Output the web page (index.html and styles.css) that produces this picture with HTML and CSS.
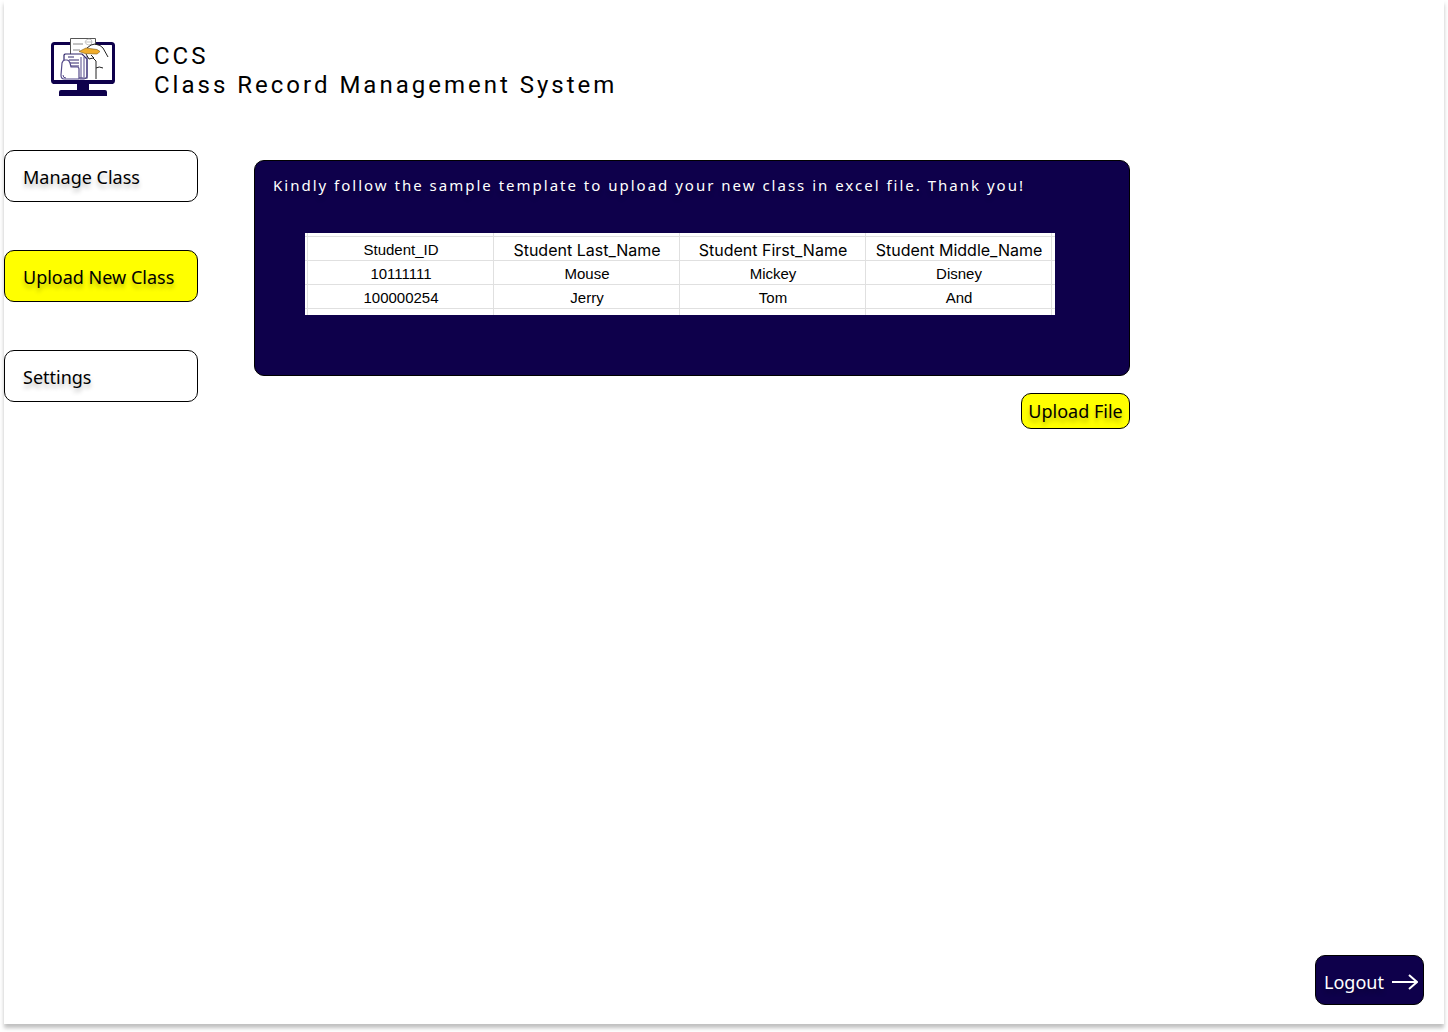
FILE: index.html
```html
<!DOCTYPE html>
<html lang="en">
<head>
<meta charset="utf-8">
<meta name="viewport" content="width=device-width, initial-scale=1">
<title>CCS Class Record Management System</title>
<link rel="stylesheet" href="styles.css">
</head>
<body>
<div class="page">
  <header class="header">
    <svg class="logo" viewBox="0 0 64 60" fill="none" aria-hidden="true">
      <rect x="1.5" y="6.5" width="61" height="39" rx="2" fill="#fff" stroke="#0e004b" stroke-width="3"/>
      <path d="M2 43h60v4H2zM26 47h12v6h16q2 0 2 2v4H8v-4q0-2 2-2h16z" fill="#0e004b"/>
      <path d="M19.500 18V1.500h25V10L40 20H19.500z" fill="#fff"/>
      <path d="M19.500 18V1.500h25V8" stroke="#555" stroke-width="1"/>
      <path d="M22 7h10M22 13h7" stroke="#888" stroke-width="1"/>
      <path d="M34 5q1-3 4-3t3 3-3 3-4-3M35 5h6" stroke="#aaa" stroke-width=".7"/>
      <path d="M14 17h17l5 5v19H13V18z" fill="#fff" stroke="#30266b" stroke-width="1.200"/>
      <path d="M17 20h6M18 23h10M18 26h10M18 29h10" stroke="#30266b" stroke-width="1"/>
      <path d="M11 26q1-3 3-3h2q2 0 3 3l1 4h6q2 0 2 2v10H13q-3 0-3-4z" fill="#fff" stroke="#554b8b" stroke-width="1.200"/>
      <path d="M12 38q0 3 3 3M29 42h4q3 0 3-3V19M30 41V20M33 40V20" stroke="#554b8b" stroke-width="1"/>
      <path d="M36 11q4-4 8-4 6 1 8 4l5 9M35 17l3 5 4-1 3 3v18M45 31q3-2 7 0M40 18l3 3" stroke="#222" stroke-width="1"/>
      <path d="M28 14.500l7-3.500 11 1.500 3 2-3 2.500-12-.5z" fill="#f0ad2c" stroke="#805b10" stroke-width=".6"/>
    </svg>
    <h1 class="title">CCS<br>Class Record Management System</h1>
  </header>
  <div class="body">
    <nav class="nav" aria-label="Main">
      <a class="nav-link" href="#manage">Manage Class</a>
      <a class="nav-link nav-link-active" href="#upload" aria-current="page">Upload New Class</a>
      <a class="nav-link" href="#settings">Settings</a>
    </nav>
    <main class="main">
      <section class="panel">
        <p class="hint">Kindly follow the sample template to upload your new class in excel file. Thank you!</p>
        <div class="sheet">
          <table class="sample">
            <thead>
              <tr><th class="plain" scope="col">Student_ID</th><th scope="col">Student Last_Name</th><th scope="col">Student First_Name</th><th scope="col">Student Middle_Name</th></tr>
            </thead>
            <tbody>
              <tr><td>10111111</td><td>Mouse</td><td>Mickey</td><td>Disney</td></tr>
              <tr><td>100000254</td><td>Jerry</td><td>Tom</td><td>And</td></tr>
            </tbody>
          </table>
        </div>
      </section>
      <button class="upload" type="button">Upload File</button>
    </main>
  </div>
  <footer class="footer">
    <button class="logout" type="button">Logout
      <svg class="arrow" viewBox="0 0 26 16" fill="none" stroke="#fff" stroke-width="2" aria-hidden="true"><path d="M0 8h25M17 1l8 7-8 7"/></svg>
    </button>
  </footer>
</div>
</body>
</html>
```
FILE: styles.css
```css
* {
  box-sizing: border-box;
}

body {
  margin: 0;
  padding: 0 4px 8px;
  background: #fff;
  color: #000;
  font-family: "Noto Sans", sans-serif;
}

.page {
  display: flex;
  flex-direction: column;
  min-height: calc(100vh - 8px);
  background: #fff;
  box-shadow: 0 4px 4px rgba(0, 0, 0, 0.25);
}

.header {
  display: flex;
  align-items: flex-start;
  gap: 39px;
  padding: 37px 47px 0;
}

.logo {
  flex: none;
  width: 64px;
  height: 60px;
}

.title {
  margin: 5px 0 0;
  font: 400 24px/29px Roboto, sans-serif;
  letter-spacing: 3px;
}

.body {
  display: flex;
  align-items: flex-start;
  gap: 56px;
  padding-top: 50px;
}

.nav {
  flex: none;
  display: flex;
  flex-direction: column;
  gap: 48px;
  width: 194px;
}

.nav-link {
  height: 52px;
  padding-left: 18px;
  border: 1px solid #000;
  border-radius: 10px;
  background: #fff;
  color: #000;
  font-size: 18px;
  line-height: 52px;
  text-decoration: none;
  text-shadow: 0 4px 4px rgba(0, 0, 0, 0.25);
}

.nav-link-active {
  background: #ff0;
}

.main {
  flex: 1;
  display: flex;
  flex-direction: column;
  align-items: flex-end;
  gap: 17px;
  max-width: 876px;
  padding-top: 10px;
}

.panel {
  width: 100%;
  padding: 11px 18px 60px;
  border: 1px solid #000;
  border-radius: 10px;
  background: #0e004b;
}

.hint {
  margin: 0 0 35px;
  color: #fff;
  font-size: 15px;
  line-height: 26px;
  letter-spacing: 2px;
  text-shadow: 0 4px 4px rgba(0, 0, 0, 0.25);
}

.sheet {
  max-width: 750px;
  margin-left: 32px;
  padding: 5px 3px;
  background:
    repeating-linear-gradient(90deg, #e0e0e0 0 1px, transparent 1px 186px) 2px 0 / 100% 100%,
    repeating-linear-gradient(#e0e0e0 0 1px, transparent 1px 24px) 0 3px / 100% 100%,
    #fff;
  background-repeat: no-repeat;
}

.sample {
  width: 100%;
  border-collapse: collapse;
  table-layout: fixed;
  font: 15px/24px "Liberation Sans", sans-serif;
  text-align: center;
}

.sample th,
.sample td {
  height: 24px;
  padding: 0;
  white-space: nowrap;
}

.sample th {
  font: 400 16px/24px Inter, sans-serif;
}

.sample .plain {
  font: 400 15px/24px "Liberation Sans", sans-serif;
}

.upload,
.logout {
  border: 1px solid #000;
  border-radius: 10px;
  font: 18px/34px "Noto Sans", sans-serif;
  text-shadow: 0 4px 4px rgba(0, 0, 0, 0.25);
  white-space: nowrap;
}

.upload {
  min-width: 109px;
  padding: 0 4px;
  background: #ff0;
  color: #000;
}

.footer {
  display: flex;
  justify-content: flex-end;
  margin-top: auto;
  padding: 0 20px 19px;
}

.logout {
  display: flex;
  align-items: center;
  justify-content: space-between;
  min-width: 109px;
  height: 50px;
  padding: 3px 5px 0 8px;
  background: #0e004b;
  color: #fff;
}

.arrow {
  width: 26px;
  height: 16px;
}
```
